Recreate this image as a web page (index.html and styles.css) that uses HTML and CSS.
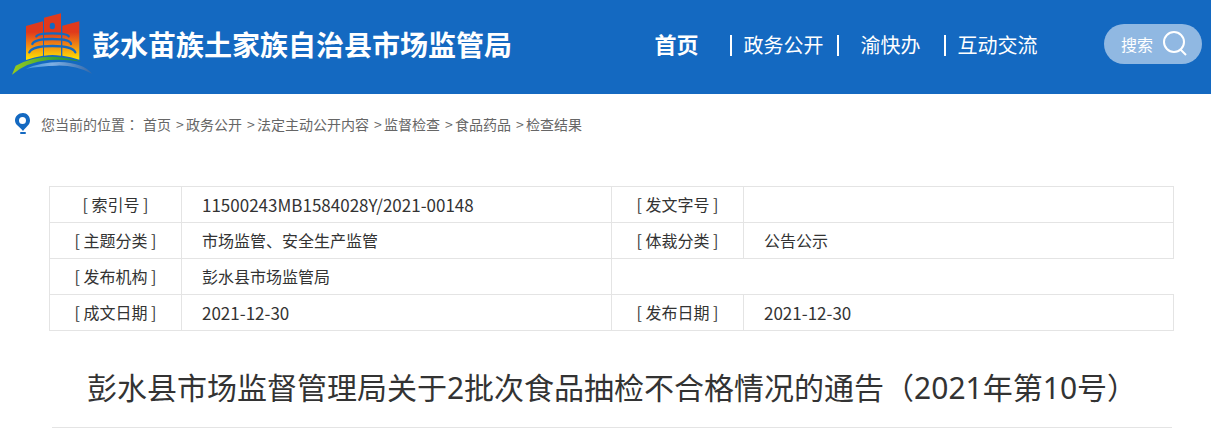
FILE: index.html
```html
<!DOCTYPE html>
<html lang="zh-CN">
<head>
    <meta charset="UTF-8">
    <meta name="viewport" content="width=device-width, initial-scale=1.0">
    <title>彭水苗族土家族自治县市场监管局</title>
    <link rel="stylesheet" href="styles.css">
</head>
<body>

    <header class="header">
        <a class="brand" href="#">
            <svg class="logo" viewBox="36 40 240 189" aria-hidden="true">
                <defs>
                    <linearGradient id="tower" gradientUnits="userSpaceOnUse" x1="0" y1="42" x2="0" y2="180">
                        <stop offset="0.4" stop-color="#e03a1c"/>
                        <stop offset="0.75" stop-color="#f39a12"/>
                        <stop offset="1" stop-color="#ffe500"/>
                    </linearGradient>
                    <linearGradient id="hill" x1="0" y1="0" x2="1" y2="0">
                        <stop offset="0" stop-color="#9acb1c"/>
                        <stop offset="0.6" stop-color="#3aa535"/>
                        <stop offset="1" stop-color="#1f8a4c"/>
                    </linearGradient>
                    <linearGradient id="river" x1="0" y1="0" x2="1" y2="0">
                        <stop offset="0" stop-color="#3f97dc"/>
                        <stop offset="0.4" stop-color="#7fb0e4"/>
                        <stop offset="1" stop-color="#3468a8"/>
                    </linearGradient>
                </defs>
                <path fill="url(#tower)" d="M78 79 129 65V168Q103 172 78 181ZM132 54 183 41V168Q157 164 132 168ZM187 78 238 65V180Q212 171 187 168Z"/>
                <ellipse cx="157" cy="79" rx="8" ry="10" fill="#1469c1"/>
                <g fill="none" stroke="#1469c1" stroke-width="7" stroke-linecap="round">
                    <path d="M109 110Q112 101 157 101T206 110"/>
                    <path d="M97 133Q103 118 157 118T213 133"/>
                    <path d="M88 158Q96 139 157 139T226 158"/>
                </g>
                <path fill="url(#hill)" d="M36 225 47 198Q96 171 158 171 205 172 244 186 200 178 145 181 80 187 36 225Z"/>
                <path fill="url(#river)" d="M78 207Q125 187 177 187 249 189 276 222 225 196 170 198 120 199 78 207Z"/>
            </svg>
            <span class="site-name">彭水苗族土家族自治县市场监管局</span>
        </a>
        <nav class="nav">
            <a class="active" href="#">首页</a>
            <a href="#">政务公开</a>
            <a href="#">渝快办</a>
            <a href="#">互动交流</a>
        </nav>
        <form class="search">
            <input type="text" placeholder="搜索" aria-label="搜索">
            <button type="button" aria-label="搜索">
                <svg viewBox="0 0 24 26" aria-hidden="true">
                    <circle cx="11" cy="11" r="10"/>
                    <path d="M17 18 23 24"/>
                </svg>
            </button>
        </form>
    </header>

    <nav class="crumbs">
        <svg class="pin" viewBox="0 0 16 22" aria-hidden="true">
            <path fill-rule="evenodd" d="M8 0C3.400 0 0 3.300 0 7.600 0 12 5 14 8 18 11 14 15 12 15 7.600 15 3.300 12 0 8 0ZM7.500 4A3.500 3.500 0 1 1 7.500 11 3.500 3.500 0 1 1 7.500 4Z"/>
            <rect x="5" y="19" width="6" height="2" rx="1"/>
        </svg>
        <span class="crumbs-label">您当前的位置<span class="punct" lang="zh-TW">：</span></span>
        <ol>
            <li><a href="#">首页</a></li>
            <li><a href="#">政务公开</a></li>
            <li><a href="#">法定主动公开内容</a></li>
            <li><a href="#">监督检查</a></li>
            <li><a href="#">食品药品</a></li>
            <li><a href="#">检查结果</a></li>
        </ol>
    </nav>

    <main class="content">
        <table class="info">
            <colgroup>
                <col class="col-label">
                <col>
                <col class="col-label">
                <col>
            </colgroup>
            <tr>
                <th scope="row">[ 索引号 ]</th>
                <td class="num">11500243MB1584028Y/2021-00148</td>
                <th scope="row">[ 发文字号 ]</th>
                <td></td>
            </tr>
            <tr>
                <th scope="row">[ 主题分类 ]</th>
                <td>市场监管、安全生产监管</td>
                <th scope="row">[ 体裁分类 ]</th>
                <td>公告公示</td>
            </tr>
            <tr>
                <th scope="row">[ 发布机构 ]</th>
                <td>彭水县市场监管局</td>
            </tr>
            <tr>
                <th scope="row">[ 成文日期 ]</th>
                <td class="num">2021-12-30</td>
                <th scope="row">[ 发布日期 ]</th>
                <td class="num">2021-12-30</td>
            </tr>
        </table>

        <h1 class="title">彭水县市场监督管理局关于2批次食品抽检不合格情况的通告<span class="punct" lang="zh-TW">（</span>2021年第10号<span class="punct" lang="zh-TW">）</span></h1>
    </main>

</body>
</html>
```

FILE: styles.css
```css
body {
    margin: 0;
    background: #fff;
    color: #333;
    font-family: "Noto Sans CJK SC", sans-serif;
    font-size: 16px;
}

a {
    color: inherit;
    text-decoration: none;
}

/* full-width marks centred in their box */
.punct {
    font-family: "Noto Sans CJK TC", sans-serif;
}

.header {
    display: flex;
    align-items: center;
    height: 94px;
    padding: 0 9px 0 12px;
    background: #1469c1;
    color: #fff;
    box-sizing: border-box;
}

.brand {
    display: flex;
    align-items: center;
    margin-right: auto;
    padding-bottom: 6px;
}

.logo {
    width: 80px;
    height: 63px;
}

.site-name {
    font-size: 28px;
    line-height: 40px;
    font-weight: bold;
    white-space: nowrap;
}

.nav {
    display: flex;
    padding-bottom: 4px;
}

.nav a {
    position: relative;
    width: 107px;
    font-size: 20px;
    line-height: 30px;
    text-align: center;
    white-space: nowrap;
}

.nav .active {
    font-size: 22px;
    line-height: 26px;
    font-weight: bold;
}

.nav a + a::before {
    content: "";
    position: absolute;
    left: 0;
    top: 5px;
    width: 2px;
    height: 21px;
    background: #fff;
}

.search {
    display: flex;
    align-items: center;
    width: 98px;
    height: 40px;
    margin: 0 0 6px 53px;
    padding: 0 15px 0 17px;
    border-radius: 20px;
    background: #90b8e2;
    box-sizing: border-box;
}

.search input {
    flex: 1;
    min-width: 0;
    padding: 0;
    border: none;
    outline: none;
    background: none;
    color: #fff;
    font: inherit;
}

.search input::placeholder {
    color: #fff;
    opacity: 1;
}

.search button {
    display: flex;
    padding: 0;
    border: none;
    background: none;
    cursor: pointer;
}

.search svg {
    width: 24px;
    height: 26px;
    fill: none;
    stroke: #fff;
    stroke-width: 2;
}

.crumbs {
    display: flex;
    align-items: center;
    padding: 17px 15px 19px;
    color: #666;
    font-size: 14px;
    line-height: 26px;
}

.pin {
    width: 16px;
    height: 22px;
    margin-right: 10px;
    fill: #1469c1;
}

.crumbs ol {
    display: flex;
    margin: 0 0 0 4px;
    padding: 0;
    list-style: none;
}

.crumbs li {
    white-space: nowrap;
}

.crumbs li + li::before {
    content: ">";
    display: inline-block;
    width: 10px;
    margin-left: 5px;
}

.content {
    padding: 30px 37px 0 49px;
}

.info {
    width: 100%;
    border-collapse: collapse;
    table-layout: fixed;
}

.col-label {
    width: 132px;
}

.info th,
.info td {
    height: 36px;
    padding: 0 0 2px;
    border: 1px solid #e4e4e4;
    box-sizing: border-box;
    font-weight: normal;
    line-height: 24px;
}

.info td {
    padding: 0 20px 2px;
}

.info .num {
    padding-bottom: 0;
    font-size: 17px;
}

.title {
    margin: 32px 2px 0 3px;
    padding-bottom: 16px;
    border-bottom: 1px solid #e4e4e4;
    font-family: "Noto Sans", "Noto Sans CJK SC", sans-serif;
    font-size: 30px;
    font-weight: normal;
    line-height: 46px;
    text-align: center;
}
```
